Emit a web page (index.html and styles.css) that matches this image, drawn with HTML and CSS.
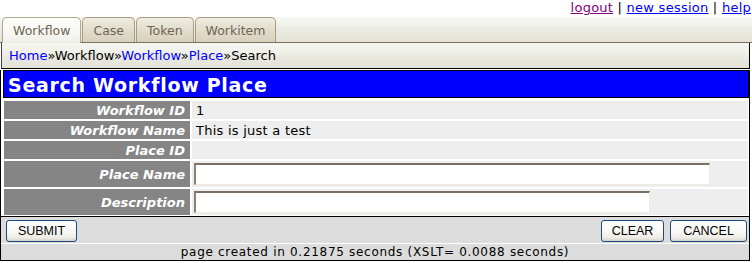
FILE: index.html
```html
<!DOCTYPE html>
<html>
<head>
<meta charset="utf-8">
<title>Search Workflow Place</title>
<link rel="stylesheet" href="styles.css">
</head>
<body>
<div class="toplinks"><a class="visited" href="#">logout</a> | <a href="#">new session</a> | <a href="#">help</a></div>
<div class="tabbar">
  <span class="tab active">Workflow</span>
  <span class="tab">Case</span>
  <span class="tab">Token</span>
  <span class="tab">Workitem</span>
</div>
<div class="crumbs"><a href="#">Home</a>»Workflow»<a href="#">Workflow</a>»<a href="#">Place</a>»Search</div>
<div class="main">
  <div class="title">Search Workflow Place</div>
  <div class="form">
    <div class="lbl">Workflow ID</div><div class="val">1</div>
    <div class="lbl">Workflow Name</div><div class="val">This is just a test</div>
    <div class="lbl">Place ID</div><div class="val"></div>
    <div class="lbl">Place Name</div><div class="val tall"><input class="field wide" type="text"></div>
    <div class="lbl">Description</div><div class="val tall"><input class="field narrow" type="text"></div>
  </div>
  <div class="buttons">
    <button class="btn submit">SUBMIT</button>
    <span class="spacer"></span>
    <button class="btn clear">CLEAR</button>
    <button class="btn cancel">CANCEL</button>
  </div>
  <div class="footer">page created in 0.21875 seconds (XSLT= 0.0088 seconds)</div>
</div>
</body>
</html>
```
FILE: styles.css
```css
* { box-sizing: border-box; }
body {
  margin: 0;
  width: 752px;
  background: #fff;
  color: #000;
  font-family: "DejaVu Sans", Verdana, sans-serif;
  font-size: 13px;
}
a { color: #0000ff; text-decoration: none; }

.toplinks {
  height: 17px;
  line-height: 15px;
  text-align: right;
  padding-right: 1px;
  letter-spacing: 0.25px;
}
.toplinks a { text-decoration: underline; }
.toplinks a.visited { color: #800080; }

.tabbar {
  height: 26px;
  display: flex;
  align-items: flex-end;
  gap: 1px;
  padding-left: 2px;
  background: linear-gradient(to bottom, #f7f7f3 0%, #f3f3ee 28%, #ebebe3 45%, #e9e8df 65%, #e4e1d6 100%);
  border-bottom: 1px solid #7d6f5c;
}
.tab {
  height: 25px;
  padding: 5px 10px 0 10px;
  line-height: 16px;
  font-size: 12.5px;
  color: #6f6553;
  border: 1px solid #a89d86;
  border-bottom: none;
  border-radius: 5px 5px 0 0;
  background: linear-gradient(to bottom, #efece0 0%, #e2ddcc 50%, #d7d0bc 100%);
}
.tab.active {
  height: 26px;
  margin-bottom: -1px;
  background: linear-gradient(to bottom, #fdfdfb 0%, #f7f7f3 60%, #efeee7 100%);
  border-color: #b1a892;
}

.crumbs {
  margin-left: 1px;
  width: 749px;
  height: 26px;
  padding: 5px 0 0 7px;
  line-height: 16px;
  border-left: 1px solid #444;
  border-right: 1px solid #000;
  border-bottom: 1px solid #000;
  background: linear-gradient(to bottom, #f6f6f1 0%, #f1f1ea 35%, #e9e8df 60%, #e4e2d7 100%);
}

.main {
  width: 750px;
  border: 1px solid #000;
  border-top: none;
}
.title {
  margin: 1px 0 0 2px;
  height: 28px;
  border: 1px solid #000;
  background: #0000ff;
  color: #fff;
  font-weight: bold;
  font-size: 19px;
  letter-spacing: 0.7px;
  padding: 3px 0 0 4px;
  line-height: 23px;
}

.form {
  display: grid;
  grid-template-columns: 186px 1fr;
  grid-template-rows: 18px 18px 18px 26px 26px;
  gap: 2px;
  padding: 3px 1px 1px 3px;
}
.lbl, .val {
  display: flex;
  align-items: center;
  line-height: 15px;
}
.lbl {
  justify-content: flex-end;
  padding-right: 5px;
  background: #858585;
  color: #fff;
  font-weight: bold;
  font-style: italic;
}
.val {
  background: #eeeeee;
  padding-left: 4px;
  letter-spacing: 0.25px;
}
.val.tall { padding-left: 2px; }

.field {
  height: 22px;
  border-style: solid;
  border-width: 2px 1px 1px 2px;
  border-color: #7a7064 #ede9dc #ede9dc #8a8174;
  background: #fff;
  font-family: "DejaVu Sans", sans-serif;
  font-size: 13px;
  padding: 0 2px;
}
.field.wide { width: 516px; }
.field.narrow { width: 456px; }

.buttons {
  border-top: 1px solid #000;
  height: 27px;
  display: flex;
  align-items: flex-start;
  padding: 3px 2px 0 5px;
  background: #dcdcdc;
}
.spacer { flex: 1; }
.btn {
  height: 22px;
  border: 1px solid #1c4a7c;
  border-radius: 3px;
  background: linear-gradient(to bottom, #ffffff 0%, #f7f7f4 55%, #ecebe5 85%, #d6d0c5 100%);
  font-family: "Liberation Sans", Arial, sans-serif;
  font-size: 12.5px;
  color: #000;
  padding: 0;
  margin: 0;
}
.btn.submit { width: 71px; }
.btn.clear { width: 63px; margin-right: 6px; }
.btn.cancel { width: 77px; }

.footer {
  margin-top: 1px;
  height: 16px;
  line-height: 16px;
  background: #dcdcdc;
  text-align: center;
  font-size: 12px;
  letter-spacing: 0.7px;
}
```
